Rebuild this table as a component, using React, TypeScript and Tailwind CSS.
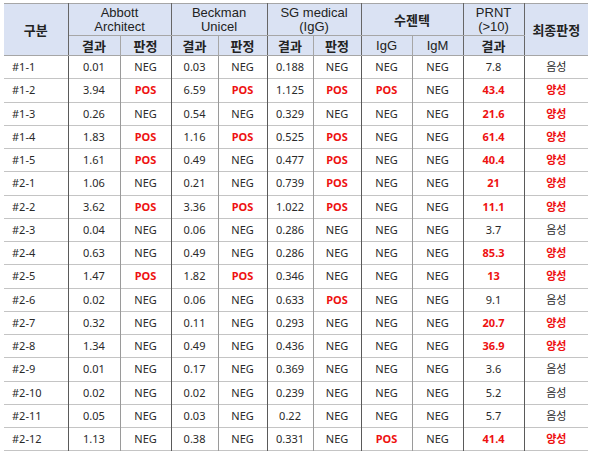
import React from "react";

const rows: string[][] = [
  ["#1-1", "0.01", "NEG", "0.03", "NEG", "0.188", "NEG", "NEG", "NEG", "7.8", "음성"],
  ["#1-2", "3.94", "POS", "6.59", "POS", "1.125", "POS", "POS", "NEG", "43.4", "양성"],
  ["#1-3", "0.26", "NEG", "0.54", "NEG", "0.329", "NEG", "NEG", "NEG", "21.6", "양성"],
  ["#1-4", "1.83", "POS", "1.16", "POS", "0.525", "POS", "NEG", "NEG", "61.4", "양성"],
  ["#1-5", "1.61", "POS", "0.49", "NEG", "0.477", "POS", "NEG", "NEG", "40.4", "양성"],
  ["#2-1", "1.06", "NEG", "0.21", "NEG", "0.739", "POS", "NEG", "NEG", "21", "양성"],
  ["#2-2", "3.62", "POS", "3.36", "POS", "1.022", "POS", "NEG", "NEG", "11.1", "양성"],
  ["#2-3", "0.04", "NEG", "0.06", "NEG", "0.286", "NEG", "NEG", "NEG", "3.7", "음성"],
  ["#2-4", "0.63", "NEG", "0.49", "NEG", "0.286", "NEG", "NEG", "NEG", "85.3", "양성"],
  ["#2-5", "1.47", "POS", "1.82", "POS", "0.346", "NEG", "NEG", "NEG", "13", "양성"],
  ["#2-6", "0.02", "NEG", "0.06", "NEG", "0.633", "POS", "NEG", "NEG", "9.1", "음성"],
  ["#2-7", "0.32", "NEG", "0.11", "NEG", "0.293", "NEG", "NEG", "NEG", "20.7", "양성"],
  ["#2-8", "1.34", "NEG", "0.49", "NEG", "0.436", "NEG", "NEG", "NEG", "36.9", "양성"],
  ["#2-9", "0.01", "NEG", "0.17", "NEG", "0.369", "NEG", "NEG", "NEG", "3.6", "음성"],
  ["#2-10", "0.02", "NEG", "0.02", "NEG", "0.239", "NEG", "NEG", "NEG", "5.2", "음성"],
  ["#2-11", "0.05", "NEG", "0.03", "NEG", "0.22", "NEG", "NEG", "NEG", "5.7", "음성"],
  ["#2-12", "1.13", "NEG", "0.38", "NEG", "0.331", "NEG", "POS", "NEG", "41.4", "양성"],
];

const widths = [64, 52, 51, 47, 49, 46, 48, 51, 51, 61, 64];

// inner borders (within a vendor group) are lighter than group borders
const innerCols = [1, 3, 5, 7];

const body = "font-['Noto_Sans','Noto_Sans_CJK_KR',sans-serif]";
const head = "font-['Liberation_Sans','Noto_Sans_CJK_KR',sans-serif]";
const kr = "font-['Noto_Sans_CJK_KR',sans-serif]";

function isRed(col: number, v: string) {
  if (v === "POS" || v === "양성") return true;
  if (col === 9 && parseFloat(v) > 10) return true;
  return false;
}

const hCell = "border-r border-b border-[#a6a6a6] text-[#222] leading-[14px] text-[13px]";

export default function App() {
  return (
    <div className="bg-white w-[597px] h-[460px] pt-[3px] pl-[4px]">
      <table className="table-fixed border-collapse w-[584px]">
        <colgroup>
          {widths.map((w, i) => (
            <col key={i} style={{ width: w }} />
          ))}
        </colgroup>
        <thead className="bg-[#dae2f3]">
          <tr className="h-[32px] border-t border-[#a6a6a6]">
            <th rowSpan={2} className={`${hCell} border-r-[#666] ${kr} font-bold`}>
              구분
            </th>
            <th colSpan={2} className={`${hCell} border-r-[#666] ${head} font-normal`}>
              Abbott
              <br />
              Architect
            </th>
            <th colSpan={2} className={`${hCell} border-r-[#666] ${head} font-normal`}>
              Beckman
              <br />
              Unicel
            </th>
            <th colSpan={2} className={`${hCell} border-r-[#666] ${head} font-normal`}>
              SG medical
              <br />
              (IgG)
            </th>
            <th colSpan={2} className={`${hCell} border-r-[#666] ${kr} font-bold`}>
              수젠텍
            </th>
            <th className={`${hCell} border-r-[#666] ${head} font-normal`}>
              PRNT
              <br />
              (&gt;10)
            </th>
            <th rowSpan={2} className={`border-b border-[#a6a6a6] text-[#222] ${kr} text-[13px] font-bold`}>
              최종판정
            </th>
          </tr>
          <tr className="h-[20px]">
            {["결과", "판정", "결과", "판정", "결과", "판정", "IgG", "IgM", "결과"].map((t, i) => (
              <th
                key={i}
                className={`${hCell} ${innerCols.includes(i + 1) ? "" : "border-r-[#666]"} ${
                  t.startsWith("Ig") ? head + " font-normal" : kr + " font-bold"
                }`}
              >
                {t}
              </th>
            ))}
          </tr>
        </thead>
        <tbody className={body}>
          {rows.map((r, ri) => (
            <tr key={ri} className="h-[23.25px] border-b border-[#c4c4c4]">
              {r.map((v, ci) => (
                <td
                  key={ci}
                  className={`${ci < 10 ? "border-r" : ""} ${
                    innerCols.includes(ci) ? "border-r-[#9a9a9a]" : "border-r-[#5a5a5a]"
                  } text-[11px] leading-[14px] ${ci === 0 ? "text-left pl-[8px]" : "text-center"} ${
                    isRed(ci, v) ? "text-[#ee1111] font-bold" : "text-[#2a2a2a]"
                  }`}
                >
                  {v}
                </td>
              ))}
            </tr>
          ))}
        </tbody>
      </table>
    </div>
  );
}
